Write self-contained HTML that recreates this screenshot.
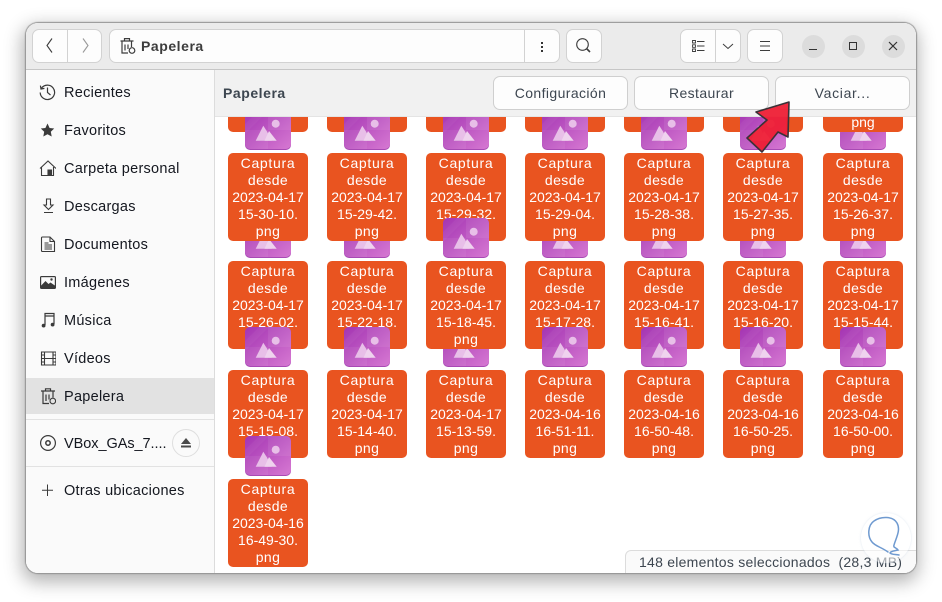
<!DOCTYPE html>
<html lang="es"><head><meta charset="utf-8"><title>Papelera</title>
<style>
*{box-sizing:border-box}
html,body{margin:0;padding:0;width:942px;height:602px;overflow:hidden;background:#fff;font-family:"Liberation Sans",sans-serif}
.a{position:absolute}
#win{position:absolute;left:26px;top:23px;width:890px;height:550px;border-radius:12px;box-shadow:0 0 1px 1px #929292,-1px 6px 18px 3px rgba(0,0,0,.3)}
#clip{position:absolute;left:26px;top:23px;width:890px;height:550px;border-radius:12px;overflow:hidden;background:#fff}
.inner{position:absolute;left:-26px;top:-23px;width:942px;height:602px}
.btn{position:absolute;background:#fdfdfd;border:1px solid #cfcfcf;border-radius:7px;color:#3d4650;font-size:14px;text-align:center;letter-spacing:.4px}
.side{position:absolute;left:64px;font-size:14.5px;color:#14171f;line-height:20px;white-space:nowrap;letter-spacing:.27px}
.sic{position:absolute;left:38px;width:18px;height:18px;fill:none;stroke:#3a3a3a;stroke-width:1.3}
.l{position:absolute;width:80px;height:88px;background:#e95420;border-radius:5px;color:#fff;font-size:14px;line-height:17px;text-align:center;padding-top:2px;white-space:nowrap}
.l i{font-style:normal;letter-spacing:.7px}
.l b{font-weight:normal;letter-spacing:.4px}
.i{position:absolute;width:46px;height:40px}
.wb{position:absolute;top:34.5px;width:23px;height:23px;border-radius:50%;background:#dcdcdc}
</style></head><body>
<svg width="0" height="0" style="position:absolute">
<defs>
<linearGradient id="g" x1="0" y1="0" x2="1" y2="1"><stop offset="0" stop-color="#a334b2"/><stop offset="1" stop-color="#d678d2"/></linearGradient>
<symbol id="pic" viewBox="0 0 46 40">
<rect x="0" y="0" width="46" height="40" rx="5" fill="#a84ab4"/>
<rect x="0" y="0" width="46" height="39" rx="5" fill="url(#g)"/>
<path d="M23 0H41a5 5 0 0 1 5 5V20H23Z" fill="#fff" opacity=".07"/>
<path d="M0 20H23V39H5a5 5 0 0 1-5-5Z" fill="#fff" opacity=".06"/>
<path d="M0 14 14 0H24L0 24Z" fill="#fff" opacity=".04"/>
<path d="M18.3 15.7 10.7 30.7H26.7L22 21.5Z" fill="#e8bfe8"/>
<path d="M24 21 19.5 30.7H31.7Z" fill="#efd3ee"/>
<circle cx="30.7" cy="13.7" r="4" fill="#e8bfe8"/>
</symbol>
</defs></svg>

<div id="win"></div>
<div id="clip"><div class="inner">
<div class="a" style="left:26px;top:23px;width:890px;height:47px;background:#ebebeb;border-bottom:1px solid #c6c6c6"></div>

<div class="btn" style="left:32px;top:29px;width:70px;height:34px;border-color:#d2d2d2"></div>
<div class="a" style="left:67px;top:30px;width:1px;height:32px;background:#d2d2d2"></div>
<svg class="a" style="left:45px;top:37px" width="12" height="18" fill="none" stroke="#3d3d3d" stroke-width="1.1"><path d="M7 1.5 2 8.5 7 15.5"/></svg>
<svg class="a" style="left:80px;top:37px" width="12" height="18" fill="none" stroke="#9a9a9a" stroke-width="1.1"><path d="M3 1.5 8 8.5 3 15.5"/></svg>

<div class="btn" style="left:109px;top:29px;width:451px;height:34px;border-color:#d2d2d2"></div>
<div class="a" style="left:524px;top:30px;width:1px;height:32px;background:#d2d2d2"></div>
<svg class="a" style="left:119px;top:37px" width="18" height="18" fill="none" stroke="#3d3d3d" stroke-width="1.2"><path d="M1.5 4H14.5M5.5 3.6V1.6H10.5V3.6M3 4.5V16H9M12.5 4.5V10M6 7.5V13.5M9 7.5V12"/><circle cx="13" cy="13.5" r="2.8" fill="#fff"/></svg>
<div class="a" style="left:141px;top:37px;font-size:14px;font-weight:bold;color:#3d3d3d;line-height:18px;letter-spacing:.55px">Papelera</div>
<div class="a" style="left:540.5px;top:41.5px;width:2.5px;height:2.5px;background:#333"></div>
<div class="a" style="left:540.5px;top:45.5px;width:2.5px;height:2.5px;background:#333"></div>
<div class="a" style="left:540.5px;top:49.5px;width:2.5px;height:2.5px;background:#333"></div>

<div class="btn" style="left:566px;top:29px;width:36px;height:34px;border-color:#d2d2d2"></div>
<svg class="a" style="left:575px;top:37px" width="18" height="18" fill="none" stroke="#3d3d3d" stroke-width="1.1"><circle cx="7.5" cy="7.5" r="5.8"/><path d="M11.5 11.5 15 15" stroke-width="1.6"/></svg>

<div class="btn" style="left:680px;top:29px;width:61px;height:34px;border-color:#d2d2d2"></div>
<div class="a" style="left:715px;top:30px;width:1px;height:32px;background:#d2d2d2"></div>
<svg class="a" style="left:691px;top:39px" width="14" height="14" fill="none" stroke="#3d3d3d"><path d="M1.5 1.5h3v2.5h-3zM1.5 5.8h3v2.5h-3zM1.5 10h3v2.5h-3z" stroke-width=".9"/><path d="M6 2.5H13.5M6 7H13.5M6 11.5H13.5" stroke-width="1"/></svg>
<svg class="a" style="left:721px;top:42px" width="14" height="9" fill="none" stroke="#3d3d3d" stroke-width="1"><path d="M2 2 7 6.5 12 2"/></svg>
<div class="btn" style="left:747px;top:29px;width:36px;height:34px;border-color:#d2d2d2"></div>
<svg class="a" style="left:757px;top:39px" width="16" height="14" fill="none" stroke="#3d3d3d" stroke-width="1"><path d="M3 2.5H13M3 7H13M3 11.5H13"/></svg>

<div class="wb" style="left:801.5px"></div>
<div class="wb" style="left:841.5px"></div>
<div class="wb" style="left:881.5px"></div>
<div class="a" style="left:809px;top:48.5px;width:8px;height:1.3px;background:#333"></div>
<div class="a" style="left:849px;top:42px;width:8px;height:8px;border:1.2px solid #333"></div>
<svg class="a" style="left:888px;top:41px" width="10" height="10" fill="none" stroke="#333" stroke-width="1.2"><path d="M1 1 9 9M9 1 1 9"/></svg>

<!-- sidebar -->
<div class="a" style="left:26px;top:70px;width:189px;height:503px;background:#fafafa;border-right:1px solid #dcdcdc"></div>
<div class="a" style="left:26px;top:378px;width:188px;height:36px;background:#e2e2e2"></div>
<div class="a" style="left:26px;top:419px;width:188px;height:1px;background:#e2e2e2"></div>
<div class="a" style="left:26px;top:466px;width:188px;height:1px;background:#e2e2e2"></div>

<svg class="sic" style="top:83px" viewBox="0 0 18 18"><path d="M3.5 5.2A7.2 7.2 0 1 1 2.2 9.5M2.4 2.6 3 6 6.4 5.4M9.5 4.5V9.5L12.5 12" stroke-width="1.2"/></svg>
<svg class="sic" style="top:121px" viewBox="0 0 18 18"><path d="M9.5 2.5 11.6 7 16.2 7.5 12.8 10.8 13.7 15.5 9.5 13.2 5.3 15.5 6.2 10.8 2.8 7.5 7.4 7Z" fill="#3a3a3a" stroke="none"/></svg>
<svg class="sic" style="top:159px" viewBox="0 0 18 18"><path d="M2 9.5 10 2 18 9.5M3.5 8V16.5H15.5V8M10 16.5V11H13.5V16.5" stroke-width="1.1"/><rect x="10" y="11" width="3.5" height="5.5" fill="#3a3a3a" stroke="none"/></svg>
<svg class="sic" style="top:197px" viewBox="0 0 18 18"><path d="M8.5 2H12.5V8H15L10.5 12.5 6 8H8.5ZM6 15.5H15" stroke-width="1.1"/></svg>
<svg class="sic" style="top:235px" viewBox="0 0 18 18"><path d="M4.5 2H12L16.5 6.5V16.5H4.5a1 1 0 0 1-1-1V3a1 1 0 0 1 1-1ZM6.5 8H10.5M6.5 10H14M6.5 12H14M6.5 14H14M12 2V6.5H16.5" stroke-width="1.1"/></svg>
<svg class="sic" style="top:273px" viewBox="0 0 18 18"><rect x="2" y="3" width="16" height="13" rx="1.5" fill="#3a3a3a" stroke="none"/><rect x="3.2" y="4.2" width="13.6" height="8.3" fill="#fafafa" stroke="none"/><path d="M3.2 12.5 7.5 8 10.5 11 12.5 9.5 16.8 12.5Z" fill="#3a3a3a" stroke="none"/><circle cx="13.5" cy="6.5" r="1.2" fill="#3a3a3a" stroke="none"/></svg>
<svg class="sic" style="top:311px" viewBox="0 0 18 18"><path d="M7 14V2.5H16V13M7 5H16" stroke-width="1.2"/><circle cx="5.6" cy="14.6" r="1.9" fill="#3a3a3a" stroke="none"/><circle cx="14.6" cy="13.6" r="1.9" fill="#3a3a3a" stroke="none"/></svg>
<svg class="sic" style="top:349px" viewBox="0 0 18 18"><path d="M3.5 3H18V16H3.5ZM6.5 3V16M15 3V16M6.5 9.5H15M3.5 6H6.5M3.5 9.5H6.5M3.5 13H6.5M15 6H18M15 9.5H18M15 13H18" stroke-width="1.1"/></svg>
<svg class="sic" style="top:387px" viewBox="0 0 18 18"><path d="M3 4H17M7.5 3.6V1.8H12.5V3.6M5 4.5V16.5H11M15 4.5V10.5M8 7.5V14M11 7.5V12.5" stroke-width="1.2"/><circle cx="14.8" cy="14" r="2.8" fill="#e2e2e2" stroke-width="1.1"/></svg>
<svg class="sic" style="top:434px" viewBox="0 0 18 18"><circle cx="10" cy="9" r="7.4" stroke-width="1.2"/><circle cx="10" cy="9" r="2.2" stroke-width="1.5"/></svg>
<svg class="sic" style="top:481px" viewBox="0 0 18 18"><path d="M9.5 3.5V15M4 9.2H15" stroke-width="1"/></svg>

<div class="side" style="top:83px">Recientes</div>
<div class="side" style="top:121px">Favoritos</div>
<div class="side" style="top:159px">Carpeta personal</div>
<div class="side" style="top:197px">Descargas</div>
<div class="side" style="top:235px">Documentos</div>
<div class="side" style="top:273px">Imágenes</div>
<div class="side" style="top:311px">Música</div>
<div class="side" style="top:349px">Vídeos</div>
<div class="side" style="top:387px">Papelera</div>
<div class="side" style="top:434px;letter-spacing:-.05px">VBox_GAs_7....</div>
<div class="a" style="left:172px;top:429px;width:28px;height:28px;border:1px solid #dedede;border-radius:50%"></div>
<svg class="a" style="left:180px;top:437px" width="13" height="12"><path d="M6 1 11 7H1Z" fill="#4a4a4a"/><rect x="1" y="8.5" width="10" height="2" fill="#4a4a4a"/></svg>
<div class="side" style="top:481px">Otras ubicaciones</div>

<!-- action bar -->
<div class="a" style="left:215px;top:70px;width:701px;height:47px;background:#f1f1f1;border-bottom:1px solid #e4e4e4"></div>
<div class="a" style="left:223px;top:84px;font-size:14px;font-weight:bold;color:#3d4650;line-height:18px;letter-spacing:.55px">Papelera</div>
<div class="btn" style="left:493px;top:76px;width:135px;height:34px;line-height:32px">Configuración</div>
<div class="btn" style="left:634px;top:76px;width:135px;height:34px;line-height:32px">Restaurar</div>
<div class="btn" style="left:775px;top:76px;width:135px;height:34px;line-height:32px;letter-spacing:.7px">Vaciar...</div>

<!-- grid -->
<div class="a" style="left:215px;top:117px;width:701px;height:456px;overflow:hidden;background:#fff">
<div class="a" style="left:-215px;top:-117px;width:942px;height:602px">
<svg class="i" style="left:840px;top:110px"><use href="#pic"/></svg>
<div class="l" style="left:228px;top:44px"></div>
<div class="l" style="left:327px;top:44px"></div>
<div class="l" style="left:426px;top:44px"></div>
<div class="l" style="left:525px;top:44px"></div>
<div class="l" style="left:624px;top:44px"></div>
<div class="l" style="left:723px;top:44px"></div>
<div class="l" style="left:823px;top:44px"><br><br><br><br>png</div>
<svg class="i" style="left:245px;top:110px"><use href="#pic"/></svg>
<svg class="i" style="left:344px;top:110px"><use href="#pic"/></svg>
<svg class="i" style="left:443px;top:110px"><use href="#pic"/></svg>
<svg class="i" style="left:542px;top:110px"><use href="#pic"/></svg>
<svg class="i" style="left:641px;top:110px"><use href="#pic"/></svg>
<svg class="i" style="left:740px;top:110px"><use href="#pic"/></svg>

<svg class="i" style="left:245px;top:218px"><use href="#pic"/></svg>
<svg class="i" style="left:344px;top:218px"><use href="#pic"/></svg>
<svg class="i" style="left:542px;top:218px"><use href="#pic"/></svg>
<svg class="i" style="left:641px;top:218px"><use href="#pic"/></svg>
<svg class="i" style="left:740px;top:218px"><use href="#pic"/></svg>
<svg class="i" style="left:840px;top:218px"><use href="#pic"/></svg>
<div class="l" style="left:228px;top:153px"><i>Captura</i><br><b>desde</b><br>2023-04-17<br>15-30-10.<br><b>png</b></div>
<div class="l" style="left:327px;top:153px"><i>Captura</i><br><b>desde</b><br>2023-04-17<br>15-29-42.<br><b>png</b></div>
<div class="l" style="left:426px;top:153px"><i>Captura</i><br><b>desde</b><br>2023-04-17<br>15-29-32.<br><b>png</b></div>
<div class="l" style="left:525px;top:153px"><i>Captura</i><br><b>desde</b><br>2023-04-17<br>15-29-04.<br><b>png</b></div>
<div class="l" style="left:624px;top:153px"><i>Captura</i><br><b>desde</b><br>2023-04-17<br>15-28-38.<br><b>png</b></div>
<div class="l" style="left:723px;top:153px"><i>Captura</i><br><b>desde</b><br>2023-04-17<br>15-27-35.<br><b>png</b></div>
<div class="l" style="left:823px;top:153px"><i>Captura</i><br><b>desde</b><br>2023-04-17<br>15-26-37.<br><b>png</b></div>
<svg class="i" style="left:443px;top:218px"><use href="#pic"/></svg>

<svg class="i" style="left:443px;top:327px"><use href="#pic"/></svg>
<div class="l" style="left:228px;top:261px"><i>Captura</i><br><b>desde</b><br>2023-04-17<br>15-26-02.<br><b>png</b></div>
<div class="l" style="left:327px;top:261px"><i>Captura</i><br><b>desde</b><br>2023-04-17<br>15-22-18.<br><b>png</b></div>
<div class="l" style="left:426px;top:261px"><i>Captura</i><br><b>desde</b><br>2023-04-17<br>15-18-45.<br><b>png</b></div>
<div class="l" style="left:525px;top:261px"><i>Captura</i><br><b>desde</b><br>2023-04-17<br>15-17-28.<br><b>png</b></div>
<div class="l" style="left:624px;top:261px"><i>Captura</i><br><b>desde</b><br>2023-04-17<br>15-16-41.<br><b>png</b></div>
<div class="l" style="left:723px;top:261px"><i>Captura</i><br><b>desde</b><br>2023-04-17<br>15-16-20.<br><b>png</b></div>
<div class="l" style="left:823px;top:261px"><i>Captura</i><br><b>desde</b><br>2023-04-17<br>15-15-44.<br><b>png</b></div>
<svg class="i" style="left:245px;top:327px"><use href="#pic"/></svg>
<svg class="i" style="left:344px;top:327px"><use href="#pic"/></svg>
<svg class="i" style="left:542px;top:327px"><use href="#pic"/></svg>
<svg class="i" style="left:641px;top:327px"><use href="#pic"/></svg>
<svg class="i" style="left:740px;top:327px"><use href="#pic"/></svg>
<svg class="i" style="left:840px;top:327px"><use href="#pic"/></svg>

<div class="l" style="left:228px;top:370px"><i>Captura</i><br><b>desde</b><br>2023-04-17<br>15-15-08.<br><b>png</b></div>
<div class="l" style="left:327px;top:370px"><i>Captura</i><br><b>desde</b><br>2023-04-17<br>15-14-40.<br><b>png</b></div>
<div class="l" style="left:426px;top:370px"><i>Captura</i><br><b>desde</b><br>2023-04-17<br>15-13-59.<br><b>png</b></div>
<div class="l" style="left:525px;top:370px"><i>Captura</i><br><b>desde</b><br>2023-04-16<br>16-51-11.<br><b>png</b></div>
<div class="l" style="left:624px;top:370px"><i>Captura</i><br><b>desde</b><br>2023-04-16<br>16-50-48.<br><b>png</b></div>
<div class="l" style="left:723px;top:370px"><i>Captura</i><br><b>desde</b><br>2023-04-16<br>16-50-25.<br><b>png</b></div>
<div class="l" style="left:823px;top:370px"><i>Captura</i><br><b>desde</b><br>2023-04-16<br>16-50-00.<br><b>png</b></div>
<svg class="i" style="left:245px;top:436px"><use href="#pic"/></svg>
<div class="l" style="left:228px;top:479px"><i>Captura</i><br><b>desde</b><br>2023-04-16<br>16-49-30.<br><b>png</b></div>
</div></div>

<!-- status -->
<div class="a" style="left:625px;top:550px;width:292px;height:24px;background:#fafafa;border:1px solid #dcdcdc;border-top-left-radius:6px;color:#3d4650;font-size:14px;line-height:22px;padding-left:13px;white-space:pre;letter-spacing:.25px">148 elementos seleccionados  (28,3 MB)</div>
</div></div>

<!-- watermark -->
<div class="a" style="left:861px;top:513px;width:50px;height:50px;border-radius:50%;background:rgba(255,255,255,.55);box-shadow:0 0 2px rgba(190,205,225,.5)"></div>
<svg class="a" style="left:861px;top:513px" width="50" height="50" fill="none" stroke="#6f9ad0" stroke-width="1.5"><path d="M27 39C20 34 14 33 11 29 6 23 7 12 13 8 20 3 32 3 36 10 40 17 35 25 33 32 32 35 35 34 37 37 33 38 30 38 29 40 31 42 35 41 38 42" stroke-linecap="round"/></svg>

<!-- arrow -->
<svg class="a" style="left:0;top:0" width="942" height="602"><path d="M789 102 756 112 767 120 747 138 762 152 778 132 788 137Z" fill="#ee1f35" fill-opacity=".95" stroke="#3a3238" stroke-width="1.6" stroke-linejoin="round"/></svg>
</body></html>
